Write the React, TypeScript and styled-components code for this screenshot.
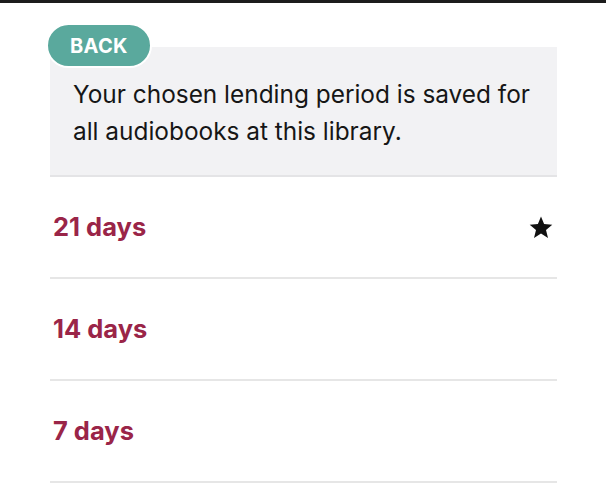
import React from 'react';
import styled, { createGlobalStyle } from 'styled-components';

const GlobalStyle = createGlobalStyle`
  html, body {
    margin: 0;
    background: #ffffff;
    font-family: Inter, 'Noto Sans', sans-serif;
  }
`;

const Page = styled.div`
  border-top: 3px solid #1c1c1c;
  padding: 44px 49px 0 50px;
`;

const InfoCard = styled.div`
  position: relative;
  background: #f2f2f4;
  padding: 29px 23px 25px;
  border-bottom: 2px solid #e4e4e6;
`;

const BackButton = styled.button`
  position: absolute;
  top: -24px;
  left: -4px;
  height: 45px;
  padding: 0 22px;
  border: 2px solid #ffffff;
  border-radius: 23px;
  background: #5aa99d;
  color: #ffffff;
  font-family: Inter, sans-serif;
  font-weight: 700;
  font-size: 20px;
  letter-spacing: 0.3px;
`;

const InfoText = styled.p`
  margin: 0;
  font-size: 24.4px;
  line-height: 37px;
  color: #161616;
`;

const OptionList = styled.ul`
  list-style: none;
  margin: 0;
  padding: 0;
`;

const Option = styled.li`
  display: flex;
  align-items: center;
  justify-content: space-between;
  height: 100px;
  padding: 0 4px 0 3px;
  border-bottom: 2px solid #e6e6e6;
`;

const OptionLabel = styled.span`
  font-size: 25.5px;
  font-weight: 700;
  color: #9a2548;
  margin-top: -2px;
`;

const Star = () => (
  <svg width="24" height="23" viewBox="0 0 24 23">
    <path
      d="M12 0.5l3.1 7.6 8.2 0.6-6.3 5.3 2 8-7-4.4-7 4.4 2-8-6.3-5.3 8.2-0.6z"
      fill="#111111"
    />
  </svg>
);

const options = [
  { label: '21 days', preferred: true },
  { label: '14 days', preferred: false },
  { label: '7 days', preferred: false },
];

export default function App() {
  return (
    <>
      <GlobalStyle />
      <Page>
        <InfoCard>
          <BackButton>BACK</BackButton>
          <InfoText>
            Your chosen lending period is saved for
            <br />
            all audiobooks at this library.
          </InfoText>
        </InfoCard>
        <OptionList>
          {options.map((o) => (
            <Option key={o.label}>
              <OptionLabel>{o.label}</OptionLabel>
              {o.preferred && <Star />}
            </Option>
          ))}
        </OptionList>
      </Page>
    </>
  );
}
